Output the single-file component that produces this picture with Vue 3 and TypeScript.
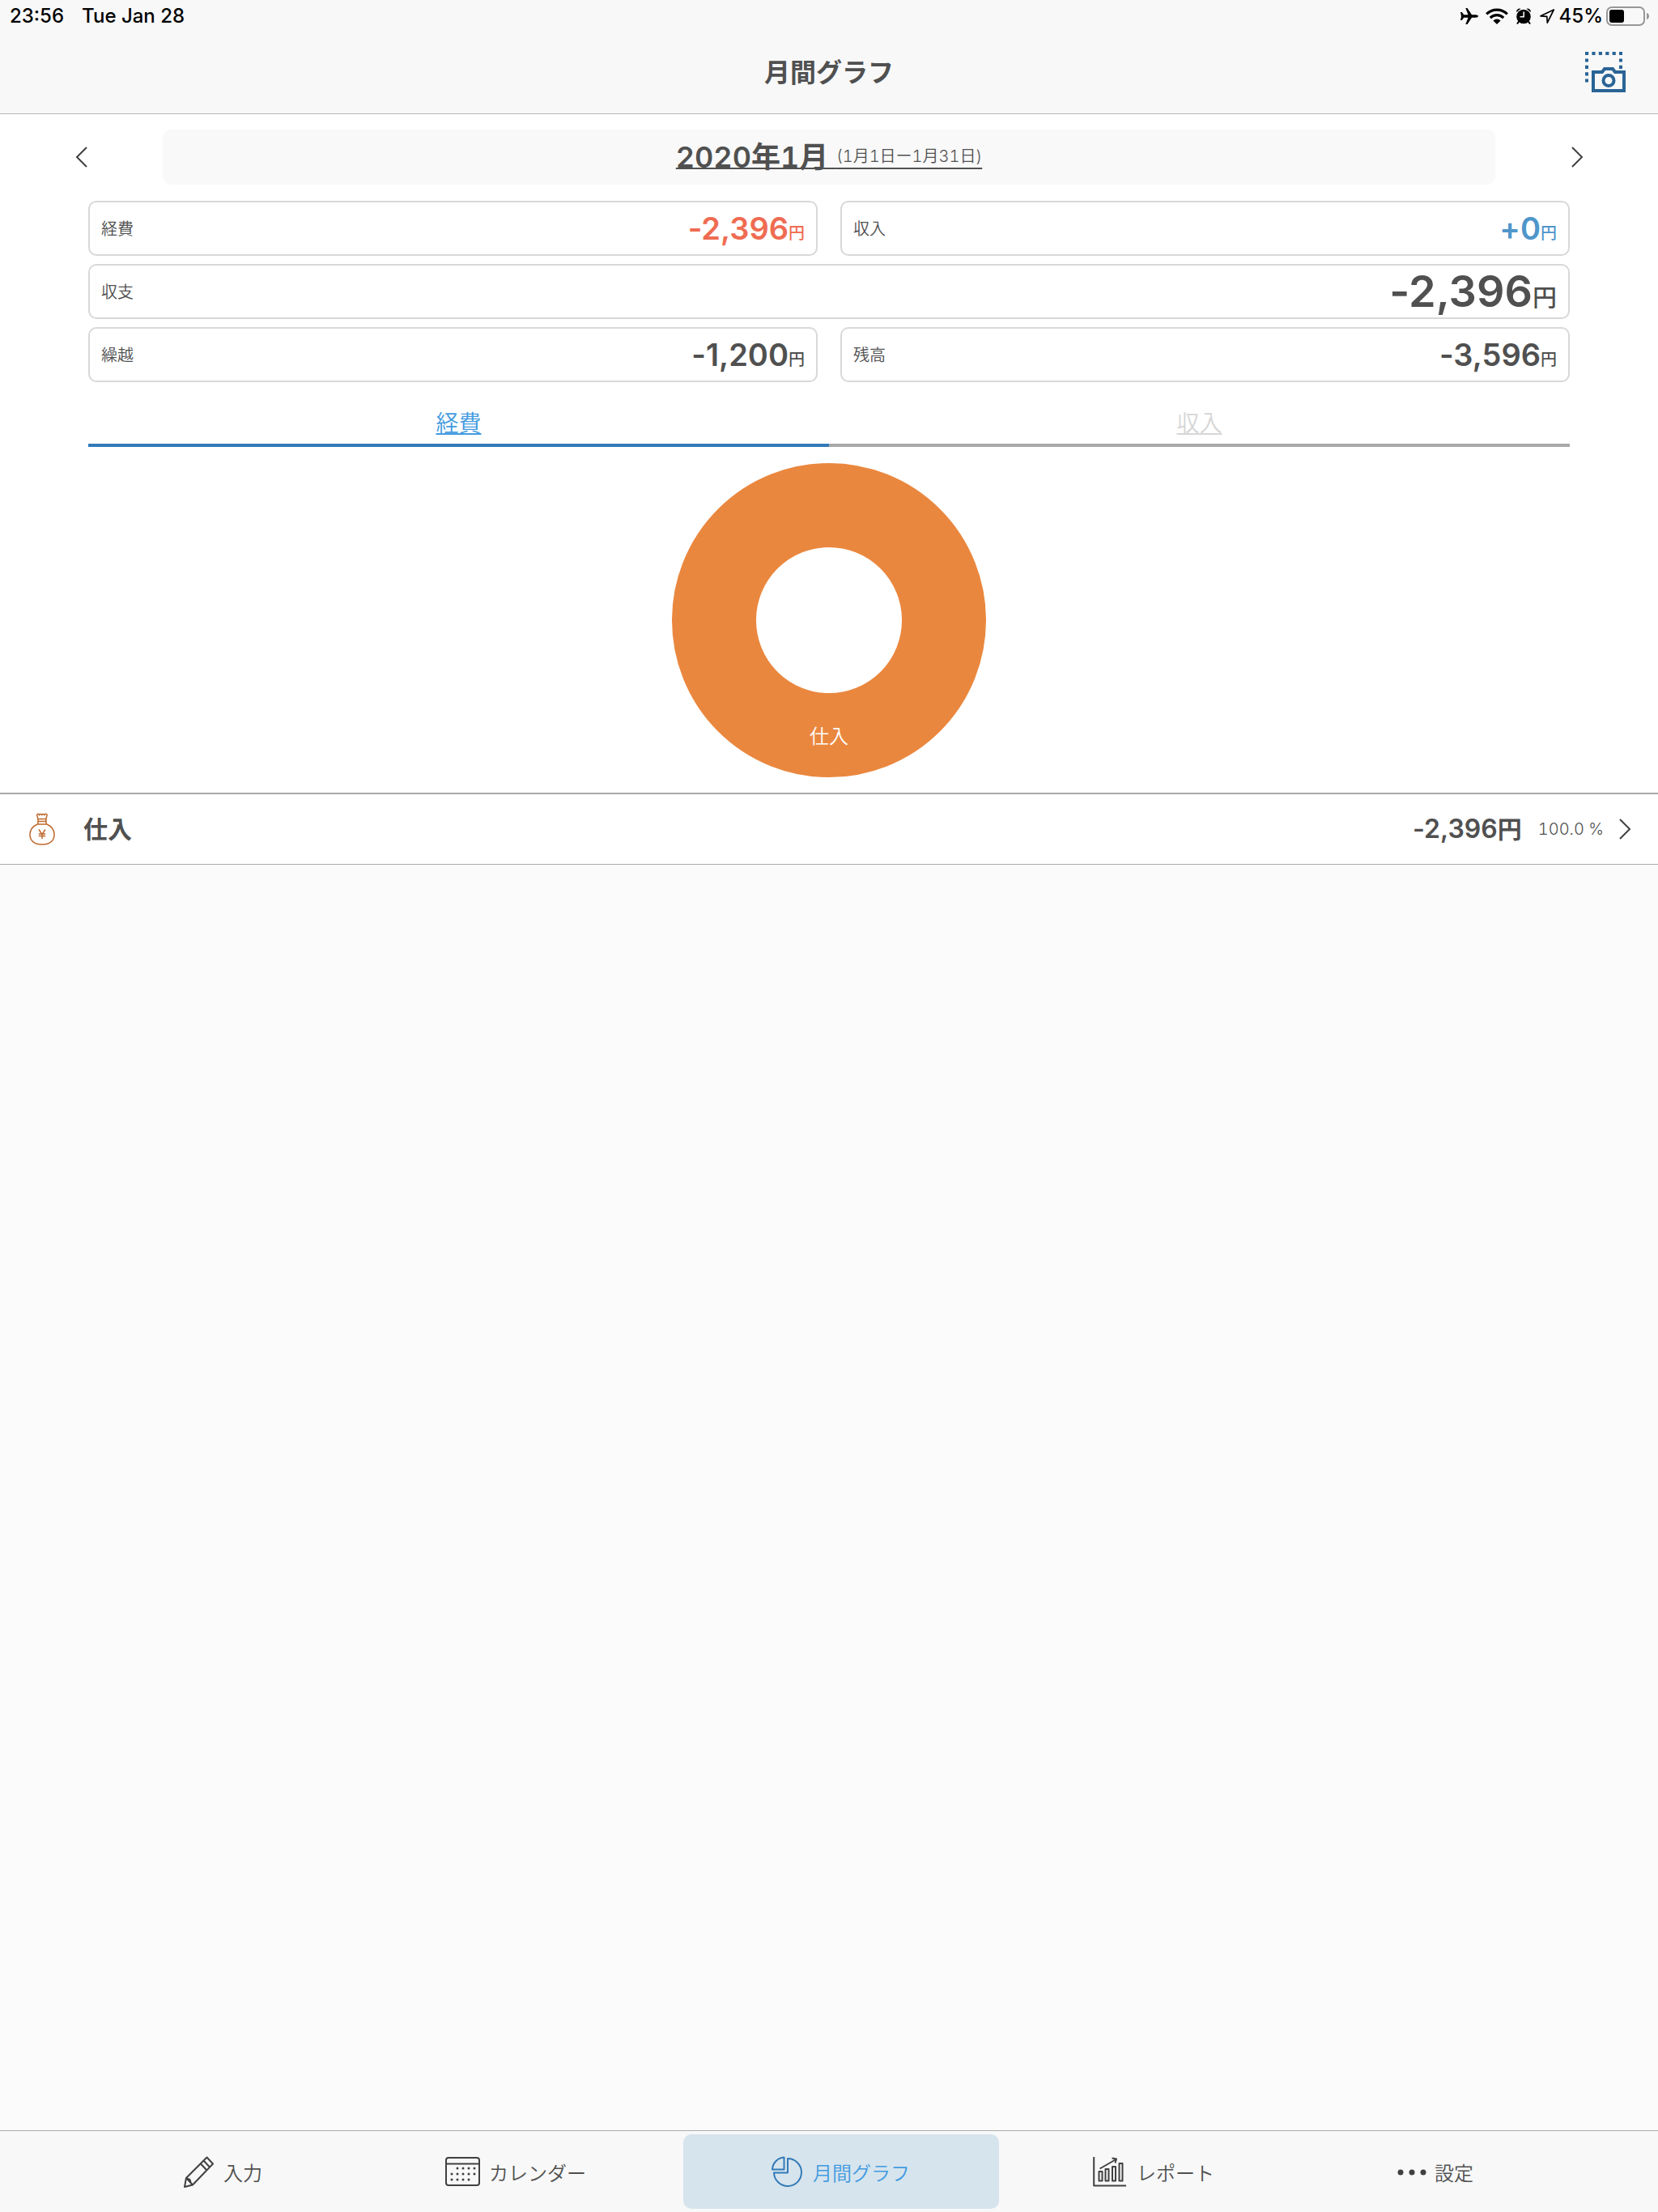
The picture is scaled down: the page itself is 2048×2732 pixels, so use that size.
<script setup lang="ts">
import { ref } from 'vue'

type Summary = {
  label: string
  amount: string
  tone?: 'minus' | 'plus'
  total?: boolean
}

type Tab = { id: string; label: string }

const summaries: Summary[] = [
  { label: '経費', amount: '-2,396', tone: 'minus' },
  { label: '収入', amount: '+0', tone: 'plus' },
  { label: '収支', amount: '-2,396', total: true },
  { label: '繰越', amount: '-1,200' },
  { label: '残高', amount: '-3,596' },
]

const kinds: Tab[] = [
  { id: 'expense', label: '経費' },
  { id: 'income', label: '収入' },
]

const tabs: Tab[] = [
  { id: 'input', label: '入力' },
  { id: 'calendar', label: 'カレンダー' },
  { id: 'graph', label: '月間グラフ' },
  { id: 'report', label: 'レポート' },
  { id: 'settings', label: '設定' },
]

const calendarDots = [
  [15, 15], [22, 15], [29, 15], [36, 15],
  [8, 22], [15, 22], [22, 22], [29, 22], [36, 22],
  [8, 29], [15, 29], [22, 29], [29, 29],
]

const activeKind = ref('expense')
const activeTab = ref('graph')
</script>

<template>
  <div class="app">
    <header class="header">
      <div class="status">
        <span class="status-time">23:56</span>
        <span>Tue Jan 28</span>
        <div class="status-right">
          <svg width="22" height="20" viewBox="0 0 22 20" aria-hidden="true">
            <path d="M0 5h1.800l2.400 3.200 5.300.1L6.300 0h2.200l5.500 8.300h4.500C20.500 8.300 22 9.200 22 10s-1.500 1.700-3.500 1.700H14L8.500 20H6.300l3.200-8.300-5.300.1L1.800 15H0l1-5z" />
          </svg>
          <svg width="28" height="20" viewBox="0 0 28 20" aria-hidden="true">
            <g fill="none" stroke="#000" stroke-width="3.200">
              <path d="M1.200 7.300a18.200 18.200 0 0 1 25.600 0" />
              <path d="M5.800 12a11.600 11.600 0 0 1 16.400 0" />
            </g>
            <path d="M14 20l-4.600-4.600a6.500 6.500 0 0 1 9.200 0z" />
          </svg>
          <svg width="20" height="20" viewBox="0 0 20 20" aria-hidden="true">
            <circle cx="10" cy="10.500" r="8.800" />
            <path d="M1 4.500A4 4 0 0 1 6.500.8L1.500 4.800zM19 4.500A4 4 0 0 0 13.500.8l5 4z" />
            <path d="M4.500 16l-2.500 3.500M15.500 16l2.500 3.500" stroke="#000" stroke-width="2" />
            <path d="M10.200 4.500v6.300H5.500" fill="none" stroke="#f8f8f8" stroke-width="1.600" />
          </svg>
          <svg width="20" height="20" viewBox="0 0 20 20" aria-hidden="true">
            <path d="M18.300 2L2 9.800l7.800.5.500 7.900z" fill="none" stroke="#000" stroke-width="1.700" stroke-linejoin="round" />
          </svg>
          <span class="battery-text">45%</span>
          <svg class="battery" width="54" height="24" viewBox="0 0 54 24" aria-hidden="true">
            <rect x="1" y="1" width="46" height="22" rx="6" fill="none" stroke="#979797" stroke-width="2" />
            <rect x="4" y="4" width="18" height="16" rx="3" />
            <path d="M50 8c4 1 4 7 0 8z" fill="#979797" />
          </svg>
        </div>
      </div>
      <div class="title-bar">
        <h1 class="title">月間グラフ</h1>
        <button class="camera" type="button" aria-label="スクリーンショット">
          <svg width="50" height="50" viewBox="0 0 50 50" aria-hidden="true">
            <g fill="none" stroke="#2a6496" stroke-width="4">
              <path d="M0 2h46" stroke-dasharray="4.200 4.200" />
              <path d="M2 8.400v29M44 8.400v12.600" stroke-dasharray="4.200 4.200" />
              <path d="M10 25h11l3-4h10l3 4h11v23H10z" />
              <circle cx="29" cy="35.500" r="6.500" />
            </g>
          </svg>
        </button>
      </div>
    </header>

    <main class="main">
      <section class="overview">
        <div class="period">
          <button class="step" type="button" aria-label="前の月">
            <svg width="16" height="28" viewBox="0 0 16 28" aria-hidden="true">
              <path d="M14 2L2 14l12 12" class="chevron" />
            </svg>
          </button>
          <button class="picker" type="button">
            <span class="month">2020年1月&nbsp;</span><span class="range">(1月1日ー1月31日)</span>
          </button>
          <button class="step" type="button" aria-label="次の月">
            <svg width="16" height="28" viewBox="0 0 16 28" aria-hidden="true">
              <path d="M2 2l12 12L2 26" class="chevron" />
            </svg>
          </button>
        </div>

        <dl class="summary">
          <div v-for="item in summaries" :key="item.label" class="card" :class="[item.tone, { total: item.total }]">
            <dt>{{ item.label }}</dt>
            <dd>{{ item.amount }}<small>円</small></dd>
          </div>
        </dl>

        <nav class="kinds">
          <a
            v-for="kind in kinds"
            :key="kind.id"
            class="kind"
            :class="{ active: activeKind === kind.id }"
            :href="'#' + kind.id"
            @click.prevent="activeKind = kind.id"
          >{{ kind.label }}</a>
        </nav>

        <div class="chart">
          <svg width="388" height="388" viewBox="0 0 388 388" role="img" aria-label="仕入 100.0 %">
            <circle cx="194" cy="194" r="142" fill="none" stroke="#ea873e" stroke-width="104" />
            <text x="194" y="346" text-anchor="middle" class="chart-label">仕入</text>
          </svg>
        </div>
      </section>

      <a class="row" href="#purchase">
        <svg class="bag" width="32" height="40" viewBox="0 0 32 40" aria-hidden="true">
          <g fill="none" stroke="#bf6a2d" stroke-width="1.500" stroke-linejoin="round">
            <path d="M10.500 14c1-3 .8-7-1-11.500 1-2 2.500-1.500 3 .2 1-1.500 2.200-1.500 3.200 0 1-1.500 2.200-1.500 3.200 0 .8-1.700 2.500-2.200 3.300-.2-1.500 4.500-2 8.500-.7 11.500" />
            <path d="M10.500 7.500h11M10.500 10.500h11M10 14h12" />
            <path d="M10 14C4.500 16.500 1 21.500 1 27c0 7 5 12 15 12s15-5 15-12c0-5.500-3.500-10.500-9-13" />
            <path d="M12 20.500l4 6 4-6M16 26.500v5.500M11.800 26h8.400M11.800 28.500h8.400" />
          </g>
        </svg>
        <span class="row-name">仕入</span>
        <span class="row-amount">-2,396<span class="yen">円</span></span>
        <span class="row-rate">100.0 %</span>
        <svg width="16" height="28" viewBox="0 0 16 28" aria-hidden="true">
          <path d="M2 2l12 12L2 26" class="chevron" />
        </svg>
      </a>
    </main>

    <nav class="tabbar">
      <button
        v-for="tab in tabs"
        :key="tab.id"
        type="button"
        class="tab"
        :class="{ active: activeTab === tab.id }"
        @click="activeTab = tab.id"
      >
        <svg v-if="tab.id === 'input'" width="42" height="40" viewBox="0 0 42 40" class="line" aria-hidden="true">
          <path d="M31.500 2.500l7.500 8-25 26-10 2.500 2-11zM6 28l8 8.500M24 10.500l7.500 8M27.500 6.500l7.500 8M6.500 28.500l4 1.500 1.500 5" />
        </svg>
        <svg v-else-if="tab.id === 'calendar'" width="44" height="40" viewBox="0 0 44 40" class="line" aria-hidden="true">
          <rect x="1" y="3" width="41" height="34" rx="3" />
          <path d="M1 10.500h41" />
          <circle v-for="(dot, i) in calendarDots" :key="i" :cx="dot[0]" :cy="dot[1] + 1" r="1.500" class="solid" />
        </svg>
        <svg v-else-if="tab.id === 'graph'" width="44" height="40" viewBox="0 0 44 40" class="line" aria-hidden="true">
          <path d="M18.500 2.500v15h-14.500a15.500 15.500 0 0 1 14.500-15z" />
          <path d="M23 4a17 17 0 1 1-17 17.500h17z" />
        </svg>
        <svg v-else-if="tab.id === 'report'" width="44" height="40" viewBox="0 0 44 40" class="line" aria-hidden="true">
          <path d="M1.200 2v35.500h39.800" />
          <path d="M7.500 20h4v11.500h-4zM15.500 17h4v14.500h-4zM24 14h4v17.500h-4zM32.500 10h4v21.500h-4z" />
          <path d="M8.500 16.500L28.500 5M23.500 3.500l5.500 1-1.500 5" />
        </svg>
        <svg v-else width="36" height="40" viewBox="0 0 36 40" class="line" aria-hidden="true">
          <circle cx="4" cy="21" r="3.500" class="solid" />
          <circle cx="18" cy="21" r="3.500" class="solid" />
          <circle cx="32" cy="21" r="3.500" class="solid" />
        </svg>
        <span class="tab-label">{{ tab.label }}</span>
      </button>
    </nav>
  </div>
</template>

<style>
body {
  margin: 0;
  background: #fbfbfb;
}
</style>

<style scoped>
.app {
  display: flex;
  flex-direction: column;
  min-height: 100vh;
  color: #505050;
  font-family: Inter, "Noto Sans CJK JP", sans-serif;
  font-size: 20px;
  line-height: 1;
}

button {
  padding: 0;
  border: 0;
  background: none;
  color: inherit;
  font: inherit;
  cursor: pointer;
}

svg {
  display: block;
  flex: none;
}

.chevron {
  fill: none;
  stroke: #404040;
  stroke-width: 2;
}

.header {
  height: 140px;
  border-bottom: 1px solid #b7b7b7;
  background: #f8f8f8;
}

.status {
  display: flex;
  align-items: center;
  gap: 22px;
  height: 40px;
  padding: 0 10px 0 12px;
  color: #000;
  font-size: 24px;
  font-weight: 500;
}

.status-right {
  display: flex;
  align-items: center;
  gap: 9px;
  margin-left: auto;
}

.battery {
  margin-left: -5px;
}

.battery-text {
  margin-left: -4px;
}

.title-bar {
  display: grid;
  grid-template-columns: 1fr auto 1fr;
  align-items: center;
  height: 98px;
  padding: 0 40px;
}

.title {
  grid-column: 2;
  margin: 0;
  padding-top: 2px;
  font-size: 32px;
  font-weight: 600;
}

.camera {
  justify-self: end;
}

.main {
  flex: 1;
}

.overview {
  padding-top: 19px;
  border-bottom: 2px solid #a9a9a9;
  background: #fff;
}

.period {
  display: flex;
  height: 68px;
}

.step {
  display: flex;
  align-items: center;
  justify-content: center;
  width: 201px;
}

.picker {
  flex: 1;
  border-radius: 10px;
  background: #f9f9f9;
  font-variant-numeric: tabular-nums;
}

.month {
  font-size: 36px;
  font-weight: 600;
  text-decoration: underline 2px;
  text-underline-offset: 0;
}

.range {
  font-size: 20px;
  font-weight: 350;
  vertical-align: 7px;
  text-decoration: underline 2px;
  text-underline-offset: 7px;
}

.summary {
  display: grid;
  grid-template-columns: 1fr 1fr;
  gap: 10px 28px;
  margin: 0;
  padding: 20px 109px 0;
}

.card {
  display: flex;
  align-items: center;
  justify-content: space-between;
  box-sizing: border-box;
  height: 68px;
  padding: 0 14px;
  border: 2px solid #d8d8d8;
  border-radius: 10px;
}

.card dt {
  padding-top: 2px;
  font-weight: 350;
}

.card dd {
  margin: 0;
  font-size: 38px;
  font-weight: 600;
  font-variant-ligatures: no-contextual;
}

.card small {
  font-size: 20px;
  font-weight: 500;
  vertical-align: 1px;
}

.card.total {
  grid-column: 1 / -1;
}

.card.total dd {
  font-size: 54px;
}

.card.total small {
  font-size: 30px;
}

.card.minus dd {
  color: #ef6c52;
}

.card.plus dd {
  color: #4f96cb;
}

.kinds {
  display: flex;
  margin: 22px 109px 0;
}

.kind {
  flex: 1;
  height: 54px;
  border-bottom: 4px solid #a9a9a9;
  color: #d6d6d6;
  font-size: 28px;
  font-weight: 350;
  line-height: 58px;
  text-align: center;
  text-decoration: underline 2px;
  text-underline-offset: 2px;
  text-decoration-skip-ink: none;
}

.kind.active {
  border-bottom-color: #337ab7;
  color: #429be0;
}

.chart {
  display: flex;
  justify-content: center;
  padding: 20px 0 19px;
}

.chart-label {
  fill: #fff;
  font-size: 24px;
  font-weight: 350;
}

.row {
  display: flex;
  align-items: center;
  height: 86px;
  padding: 0 33px 0 36px;
  border-bottom: 1px solid #a9a9a9;
  background: #fff;
  color: inherit;
  text-decoration: none;
}

.row-name {
  margin-left: 35px;
  font-size: 30px;
  font-weight: 600;
}

.row-amount {
  margin-left: auto;
  font-size: 32px;
  font-weight: 600;
  font-variant-ligatures: no-contextual;
}

.yen {
  font-size: 30px;
}

.row-rate {
  margin: 0 18px 0 20px;
  font-weight: 300;
  font-variant-numeric: tabular-nums;
}

.tabbar {
  display: flex;
  justify-content: center;
  gap: 10px;
  padding: 4px 0;
  border-top: 1px solid #a9acac;
  background: #f8f8f8;
}

.tab {
  display: flex;
  align-items: center;
  gap: 10px;
  height: 92px;
  padding: 0 110px 0 106px;
  border-radius: 10px;
  font-size: 24px;
  font-weight: 350;
}

.tab-label {
  padding-top: 5px;
}

.tab.active {
  background: #d6e4ed;
  color: #429be0;
}

.line {
  fill: none;
  stroke: #404040;
  stroke-width: 2;
  stroke-linejoin: round;
}

.solid {
  fill: #404040;
  stroke: none;
}

.tab.active .line {
  stroke: #337ab7;
}
</style>
